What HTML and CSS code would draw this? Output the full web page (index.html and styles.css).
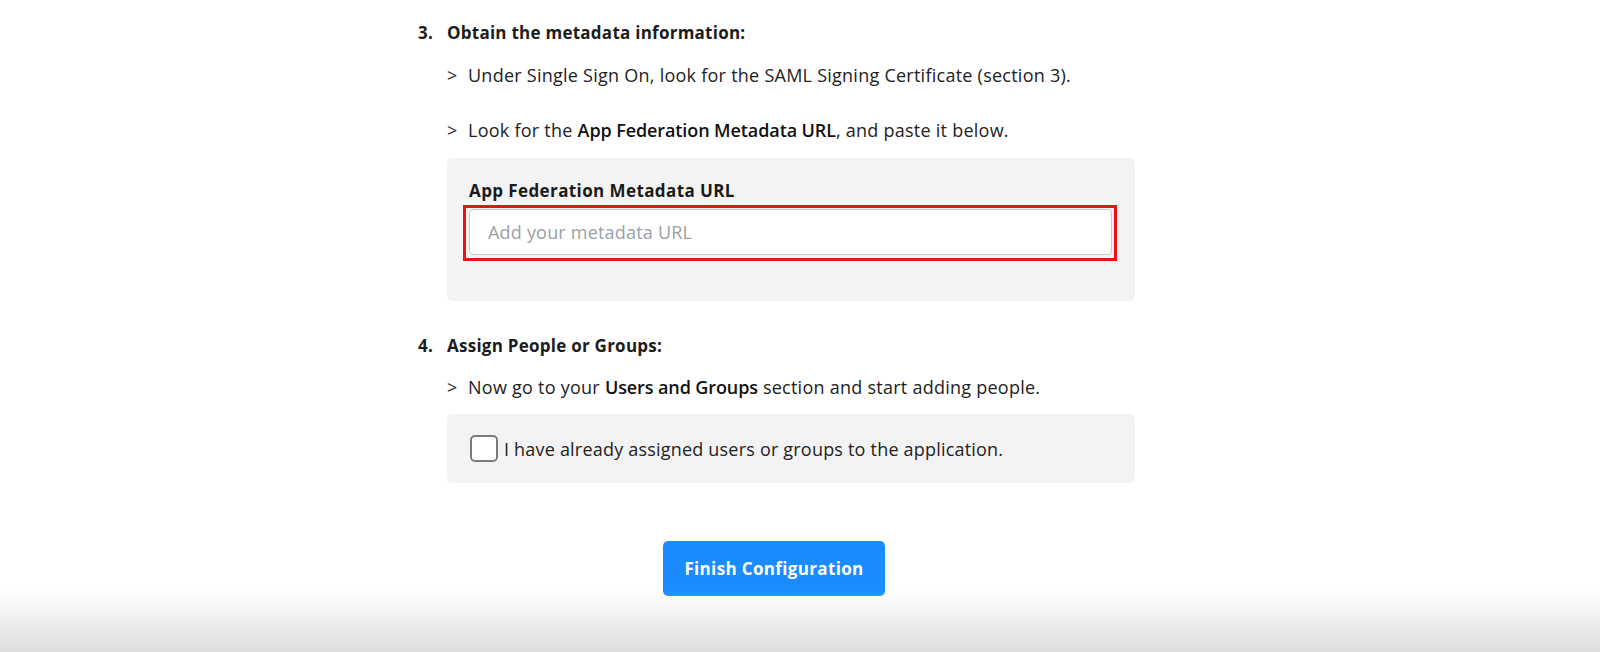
FILE: index.html
```html
<!DOCTYPE html>
<html>
<head>
<meta charset="utf-8">
<link rel="stylesheet" href="styles.css">
</head>
<body>
<div class="page">
  <div class="col">
    <div class="step">
      <div class="step-title"><span class="num">3.</span><span>Obtain the metadata information:</span></div>
      <p class="hint hint-first"><span class="gt">&gt;</span>Under Single Sign On, look for the SAML Signing Certificate (section 3).</p>
      <p class="hint hint-second"><span class="gt">&gt;</span>Look for the <span class="em">App Federation Metadata URL</span>, and paste it below.</p>
      <div class="panel panel-url">
        <label class="field-label">App Federation Metadata URL</label>
        <div class="highlight">
          <input class="url-input" type="text" placeholder="Add your metadata URL">
        </div>
      </div>
    </div>
    <div class="step step-4">
      <div class="step-title"><span class="num">4.</span><span>Assign People or Groups:</span></div>
      <p class="hint hint-first"><span class="gt">&gt;</span>Now go to your <span class="em">Users and Groups</span> section and start adding people.</p>
      <div class="panel panel-check">
        <span class="checkbox"></span>
        <span class="check-text">I have already assigned users or groups to the application.</span>
      </div>
    </div>
    <div class="actions">
      <button class="finish">Finish Configuration</button>
    </div>
  </div>
  <div class="fade"></div>
</div>
</body>
</html>
```
FILE: styles.css
```css
* { box-sizing: border-box; }
html, body { margin: 0; padding: 0; background: #fff; }
body {
  font-family: "Open Sans", Lato, sans-serif;
  color: #1c1c1c;
  width: 1600px;
  height: 652px;
  overflow: hidden;
}
.page {
  position: relative;
  height: 652px;
}
.col {
  width: 764px;
  margin-left: 418px;
  padding-top: 21px;
}
.step-title {
  display: flex;
  font-size: 17px;
  font-weight: 700;
  letter-spacing: 0.25px;
  line-height: 24px;
  height: 24px;
}
.num { width: 29px; }
.hint {
  margin: 0;
  margin-left: 29px;
  font-size: 18px;
  letter-spacing: 0.25px;
  line-height: 24px;
  color: #222;
  display: flex;
  white-space: pre;
}
.hint-first { margin-top: 18px; }
.hint-second { margin-top: 31px; }
.gt { width: 21px; }
.em { font-weight: 600; color: #111; letter-spacing: -0.1px; }
.panel {
  margin-left: 29px;
  width: 688px;
  background: #f3f3f3;
  border-radius: 5px;
}
.panel-url {
  margin-top: 16px;
  padding: 22px 18px 40px 16px;
  height: 143px;
}
.field-label {
  display: block;
  font-size: 17px;
  font-weight: 700;
  letter-spacing: 0.4px;
  line-height: 22px;
  color: #1a1a1a;
  margin-left: 6px;
  margin-bottom: 3px;
}
.highlight {
  border: 3px solid #ee1111;
  padding: 1px 2px 1px 3px;
  height: 56px;
  background: #f3f3f3;
}
.url-input {
  display: block;
  width: 100%;
  height: 46px;
  border: 1px solid #c8c8c8;
  border-radius: 4px;
  background: #fff;
  font-family: "Open Sans", Lato, sans-serif;
  font-size: 18px;
  letter-spacing: 0.2px;
  padding: 0 18px;
  color: #222;
  outline: none;
}
.url-input::placeholder { color: #9aa0a8; }
.step-4 { margin-top: 33px; }
.step-4 .hint-first { margin-top: 17px; }
.panel-check {
  margin-top: 15px;
  height: 69px;
  display: flex;
  align-items: center;
  padding-left: 23px;
}
.checkbox {
  width: 28px;
  height: 27px;
  border: 2px solid #7a7a7a;
  border-radius: 5px;
  background: #fff;
  margin-right: 6px;
}
.check-text {
  font-size: 18px;
  letter-spacing: 0.2px;
  color: #222;
  line-height: 24px;
}
.actions {
  margin-top: 58px;
  padding-left: 245px;
}
.finish {
  width: 222px;
  height: 55px;
  background: #1a8cff;
  border: none;
  border-radius: 5px;
  color: #fff;
  font-family: "Open Sans", Lato, sans-serif;
  font-size: 17px;
  font-weight: 700;
  letter-spacing: 0.35px;
}
.fade {
  position: absolute;
  left: 0;
  right: 0;
  bottom: 0;
  height: 62px;
  background: linear-gradient(to bottom, rgba(255,255,255,0), #dedede);
  pointer-events: none;
}
```
